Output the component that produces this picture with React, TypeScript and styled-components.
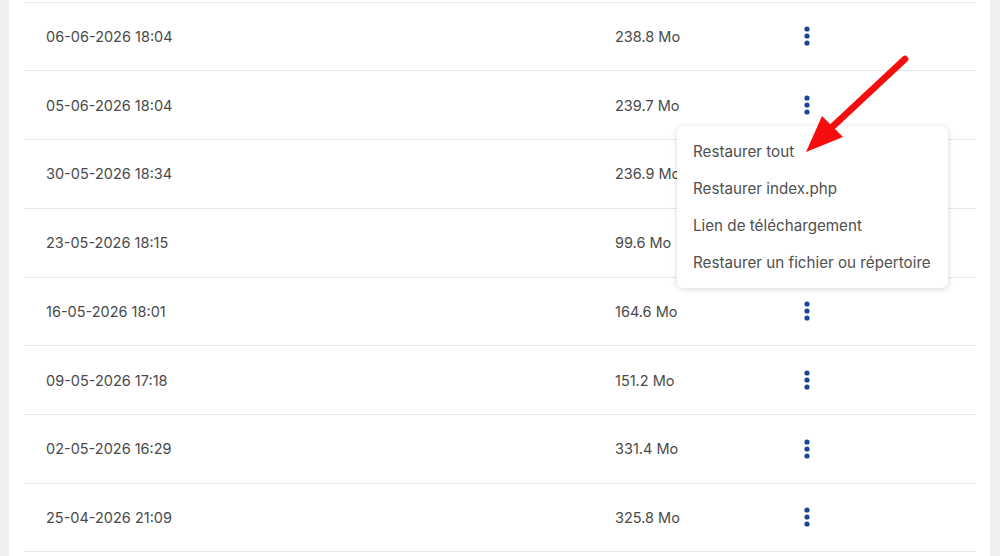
import * as React from "react"
import styled, {createGlobalStyle} from "styled-components"

const backups = [
  {date: "06-06-2026 18:04", size: "238.8 Mo"},
  {date: "05-06-2026 18:04", size: "239.7 Mo", open: true},
  {date: "30-05-2026 18:34", size: "236.9 Mo"},
  {date: "23-05-2026 18:15", size: "99.6 Mo"},
  {date: "16-05-2026 18:01", size: "164.6 Mo"},
  {date: "09-05-2026 17:18", size: "151.2 Mo"},
  {date: "02-05-2026 16:29", size: "331.4 Mo"},
  {date: "25-04-2026 21:09", size: "325.8 Mo"},
]

const menuItems = [
  "Restaurer tout",
  "Restaurer index.php",
  "Lien de téléchargement",
  "Restaurer un fichier ou répertoire",
]

const Kebab = () => (
  <svg width="8" height="22" viewBox="0 0 8 22">
    <circle cx="4" cy="4" r="2.6" fill="#1d4597"/>
    <circle cx="4" cy="11" r="2.6" fill="#1d4597"/>
    <circle cx="4" cy="18" r="2.6" fill="#1d4597"/>
  </svg>
)

const App = () => {
  return (
    <>
      <GlobalStyle/>
      <Page>
        <Card>
          <List>
            {backups.map((b, i) => (
              <Row key={i}>
                <DateCell>{b.date}</DateCell>
                <SizeCell>{b.size}</SizeCell>
                <ActionCell>
                  <KebabButton><Kebab/></KebabButton>
                  {b.open && (
                    <Menu>
                      {menuItems.map(m => <MenuItem key={m}>{m}</MenuItem>)}
                    </Menu>
                  )}
                </ActionCell>
              </Row>
            ))}
          </List>
        </Card>
        <Arrow width="1000" height="556" viewBox="0 0 1000 556">
          <line x1="905" y1="59" x2="830" y2="129" stroke="#f50c0c" strokeWidth="6.5" strokeLinecap="round"/>
          <polygon points="806,152 822,116 843,137" fill="#f50c0c"/>
        </Arrow>
      </Page>
    </>
  )
}

const GlobalStyle = createGlobalStyle`
  html, body {
    margin: 0;
    padding: 0;
    background: #f0f0f0;
    overflow: hidden;
  }
  body {
    font-family: "Inter", "Noto Sans", sans-serif;
  }
`
const Page = styled.div`
  position: relative;
  width: 1000px;
  height: 556px;
  overflow: hidden;
  padding: 0 10px 0 9px;
  box-sizing: border-box;
`
const Card = styled.div`
  background: #ffffff;
  height: 100%;
  padding: 1.5px 14px 0 15px;
  box-sizing: border-box;
`
const List = styled.div`
  display: flex;
  flex-direction: column;
`
const Row = styled.div`
  display: flex;
  align-items: center;
  height: 68.75px;
  box-sizing: border-box;
  border-top: 1px solid #e6e6e6;
  position: relative;

  &:last-child {
    border-bottom: 1px solid #e6e6e6;
  }
`
const DateCell = styled.div`
  width: 569px;
  padding-left: 22px;
  font-size: 14.5px;
  color: #4a4a4a;
`
const SizeCell = styled.div`
  width: 180px;
  font-size: 14.5px;
  color: #4a4a4a;
`
const ActionCell = styled.div`
  position: relative;
  display: flex;
  align-items: center;
`
const KebabButton = styled.div`
  width: 24px;
  height: 24px;
  display: flex;
  align-items: center;
  justify-content: center;
  cursor: pointer;
`
const Menu = styled.div`
  position: absolute;
  top: 33px;
  left: -118px;
  width: 271px;
  padding: 7px 0;
  background: #ffffff;
  border-radius: 6px;
  box-shadow: 0 1px 6px rgba(0, 0, 0, 0.16);
  z-index: 5;
`
const MenuItem = styled.div`
  height: 37px;
  line-height: 37px;
  padding-left: 16px;
  font-size: 15.2px;
  color: #4f4f4f;
  white-space: nowrap;
  cursor: pointer;
`
const Arrow = styled.svg`
  position: absolute;
  top: 0;
  left: 0;
  pointer-events: none;
  z-index: 10;
`

export default App
